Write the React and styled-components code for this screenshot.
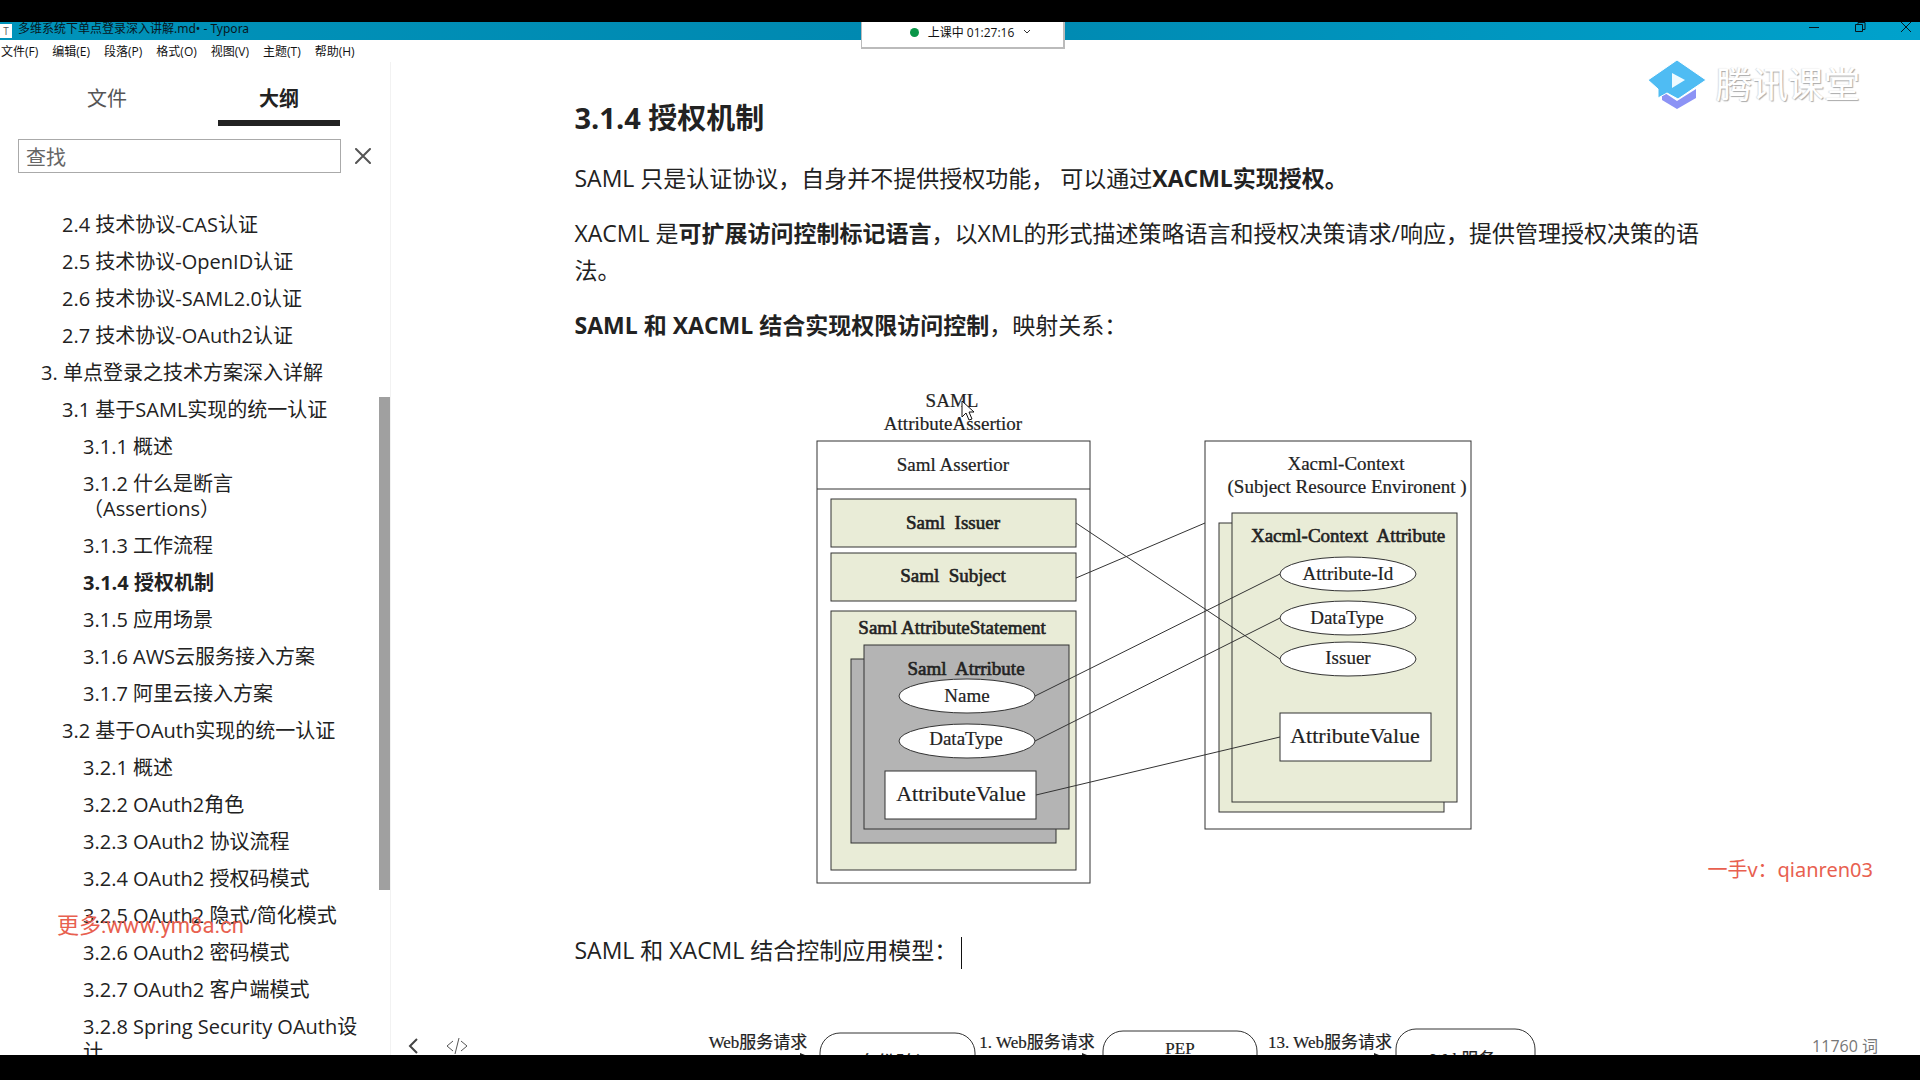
import React, { useState } from 'react'
import styled, { createGlobalStyle } from 'styled-components';

const GlobalStyle = createGlobalStyle`
    * {
        box-sizing: border-box;
    }

    body {
        margin: 0;
        background: #000;
        color: #222;
        font-family: "Open Sans", "Noto Sans CJK SC", sans-serif;
    }

    button, input {
        font: inherit;
        color: inherit;
    }

    button {
        padding: 0;
        border: 0;
        background: none;
        cursor: pointer;
    }
`;

const Screen = styled.div`
    height: 100vh;
    padding: 22px 0 25px;
`;

const Window = styled.div`
    position: relative;
    display: flex;
    flex-direction: column;
    height: 100%;
    overflow: hidden;
    background: #fff;
`;

const TitleBar = styled.header`
    display: flex;
    align-items: center;
    gap: 6px;
    height: 18px;
    padding-right: 9px;
    overflow: hidden;
    background: linear-gradient(90deg, #0093ba, #0088b0 50%, #00a2cc);
    color: #08161c;
    font-size: 12px;
    line-height: 16px;
`;

const AppBadge = styled.span`
    width: 12px;
    height: 14px;
    background: #fff;
    color: #555;
    font-size: 10px;
    line-height: 14px;
    text-align: center;
`;

const WindowTitle = styled.span`
    flex: 1;
    padding-bottom: 4px;
    font-family: "Noto Sans", "Noto Sans CJK SC", sans-serif;
`;

const WindowButtons = styled.div`
    display: flex;
    gap: 36px;
    padding-bottom: 6px;

    button {
        width: 10px;
        height: 12px;
    }

    svg {
        display: block;
    }
`;

const ClassTimer = styled.button`
    position: absolute;
    top: 0;
    left: 50%;
    display: flex;
    align-items: center;
    justify-content: center;
    gap: 9px;
    width: 204px;
    height: 27px;
    margin-left: -99px;
    padding: 0 0 5px 16px;
    border: 1px solid #bbb;
    border-width: 0 2px 2px 1px;
    background: #fff;
    color: #111;
    font-size: 12px;
`;

const LiveDot = styled.span`
    width: 9px;
    height: 9px;
    border-radius: 50%;
    background: #0a9648;
`;

const MenuBar = styled.nav`
    display: flex;
    gap: 14px;
    height: 22px;
    padding-left: 1px;
    font-size: 12px;
    line-height: 23px;

    button {
        color: #111;
    }
`;

const Workspace = styled.div`
    display: flex;
    flex: 1;
    min-height: 0;
`;

const Sidebar = styled.aside`
    display: flex;
    flex-direction: column;
    flex: 0 0 391px;
    border-right: 1px solid #f2f2f2;
    font-size: 20px;
`;

const Tabs = styled.div`
    display: flex;
    gap: 50px;
    height: 64px;
    padding: 10px 0 0 46px;
`;

const Tab = styled.button`
    width: 122px;
    height: 54px;
    padding-top: 2px;
    border-bottom: 6px solid ${({ $active }) => ($active ? '#222' : 'transparent')};
    color: ${({ $active }) => ($active ? '#222' : '#555')};
    font-weight: ${({ $active }) => ($active ? 700 : 400)};
`;

const SearchRow = styled.div`
    display: flex;
    align-items: center;
    gap: 14px;
    padding: 13px 0 0 18px;
`;

const SearchInput = styled.input`
    width: 323px;
    height: 34px;
    padding: 2px 7px 0;
    border: 1px solid #aaa;

    &::placeholder {
        color: #666;
        opacity: 1;
    }
`;

const OutlineArea = styled.div`
    display: flex;
    flex: 1;
    min-height: 0;
    padding-top: 33px;
    overflow: hidden;
`;

const Outline = styled.ul`
    flex: 1;
    margin: 0;
    padding: 0 18px 0 41px;
    list-style: none;
    text-spacing-trim: space-all;
`;

const OutlineItem = styled.li`
    padding: 6px 0 6px ${({ $level }) => $level * 21}px;
    line-height: 25px;

    a {
        color: #222;
        font-weight: ${({ $active }) => ($active ? 700 : 400)};
        text-decoration: none;
    }
`;

const ScrollThumb = styled.div`
    width: 11px;
    height: 493px;
    margin-top: 191px;
    background: #a0a0a0;
`;

const Editor = styled.main`
    flex: 1;
    min-width: 0;
    padding: 36px 24px 0 0;
    overflow: hidden;
`;

const Article = styled.article`
    max-width: 1138px;
    margin: 0 auto;
    font-size: 23px;
    line-height: 37px;

    p {
        margin: 0 0 18px;
    }

    svg {
        display: block;
        max-width: 100%;
        margin: 0 auto 18px;
    }
`;

const Heading = styled.h3`
    margin: 0 0 22px;
    font-size: 29px;
    line-height: 40px;
`;

const Caret = styled.span`
    display: inline-block;
    width: 1px;
    height: 32px;
    margin-left: 4px;
    background: #111;
    vertical-align: middle;
`;

const DiagramText = styled.text`
    fill: #222;
    font-family: "Liberation Serif", "Noto Sans CJK SC", serif;
    font-size: ${({ $size }) => $size || 19}px;
    text-anchor: middle;
    white-space: pre;
    stroke: #222;
    stroke-width: ${({ $heavy }) => ($heavy ? 0.6 : 0.2)};
`;

const StatusTools = styled.div`
    position: absolute;
    left: 408px;
    bottom: 1px;
    display: flex;
    gap: 27px;

    svg {
        display: block;
    }
`;

const WordCount = styled.button`
    position: absolute;
    right: 42px;
    bottom: -3px;
    color: #777;
    font-size: 16px;
    line-height: 24px;
`;

const Brand = styled.div`
    position: absolute;
    top: 37px;
    right: 60px;
    display: flex;
    align-items: center;
    gap: 10px;
    color: #fff;
    font-size: 36px;
    line-height: 52px;
    text-shadow: 1px 1px 1px #aaa, -1px 0 1px #ddd;
`;

const Watermark = styled.div`
    position: absolute;
    color: #e8604f;
    line-height: 30px;
`;

const SiteMark = styled(Watermark)`
    left: 57px;
    bottom: 114px;
    font-family: Roboto, "Noto Sans CJK SC", sans-serif;
    font-size: 22px;
`;

const ContactMark = styled(Watermark)`
    right: 47px;
    bottom: 170px;
    font-family: "Noto Sans", "Noto Sans CJK SC", sans-serif;
    font-size: 20px;
`;

const menus = ['文件(F)', '编辑(E)', '段落(P)', '格式(O)', '视图(V)', '主题(T)', '帮助(H)'];

const outline = [
    { level: 1, text: '2.4 技术协议-CAS认证' },
    { level: 1, text: '2.5 技术协议-OpenID认证' },
    { level: 1, text: '2.6 技术协议-SAML2.0认证' },
    { level: 1, text: '2.7 技术协议-OAuth2认证' },
    { level: 0, text: '3. 单点登录之技术方案深入详解' },
    { level: 1, text: '3.1 基于SAML实现的统一认证' },
    { level: 2, text: '3.1.1 概述' },
    { level: 2, text: '3.1.2 什么是断言（Assertions）' },
    { level: 2, text: '3.1.3 工作流程' },
    { level: 2, text: '3.1.4 授权机制' },
    { level: 2, text: '3.1.5 应用场景' },
    { level: 2, text: '3.1.6 AWS云服务接入方案' },
    { level: 2, text: '3.1.7 阿里云接入方案' },
    { level: 1, text: '3.2 基于OAuth实现的统一认证' },
    { level: 2, text: '3.2.1 概述' },
    { level: 2, text: '3.2.2 OAuth2角色' },
    { level: 2, text: '3.2.3 OAuth2 协议流程' },
    { level: 2, text: '3.2.4 OAuth2 授权码模式' },
    { level: 2, text: '3.2.5 OAuth2 隐式/简化模式' },
    { level: 2, text: '3.2.6 OAuth2 密码模式' },
    { level: 2, text: '3.2.7 OAuth2 客户端模式' },
    { level: 2, text: '3.2.8 Spring Security OAuth设计' },
];

const MappingDiagram = () => (
    <svg width="688" height="552" viewBox="0 -18 688 552" role="img" aria-label="SAML / XACML">
        <g fill="#fff" stroke="#333">
            <rect x="17" y="61" width="273" height="442" />
            <path d="M17 109H290" />
            <g fill="#e9ecd7">
                <rect x="31" y="119" width="245" height="48" />
                <rect x="31" y="173" width="245" height="48" />
                <rect x="31" y="231" width="245" height="259" />
            </g>
            <g fill="#b4b4b4">
                <rect x="51" y="279" width="205" height="184" />
                <rect x="64" y="265" width="205" height="184" />
            </g>
            <ellipse cx="167" cy="316" rx="68" ry="17" />
            <ellipse cx="167" cy="361" rx="68" ry="17" />
            <rect x="85" y="391" width="151" height="48" />

            <rect x="405" y="61" width="266" height="388" />
            <g fill="#e9ecd7">
                <rect x="419" y="143" width="225" height="289" />
                <rect x="432" y="133" width="225" height="289" />
            </g>
            <ellipse cx="548" cy="194" rx="68" ry="17" />
            <ellipse cx="548" cy="238" rx="68" ry="17" />
            <ellipse cx="548" cy="279" rx="68" ry="17" />
            <rect x="480" y="333" width="151" height="48" />

            <path d="M276 143L480 279M276 198L405 143M235 316L480 194M235 361L480 238M236 415L480 357" />
        </g>

        <DiagramText x="152" y="27">SAML</DiagramText>
        <DiagramText x="153" y="50">AttributeAssertior</DiagramText>
        <DiagramText x="153" y="91">Saml Assertior</DiagramText>
        <DiagramText x="153" y="149" $heavy>{'Saml  Issuer'}</DiagramText>
        <DiagramText x="153" y="202" $heavy>{'Saml  Subject'}</DiagramText>
        <DiagramText x="152" y="254" $heavy>Saml AttributeStatement</DiagramText>
        <DiagramText x="166" y="295" $heavy>{'Saml  Atrribute'}</DiagramText>
        <DiagramText x="167" y="322">Name</DiagramText>
        <DiagramText x="166" y="365">DataType</DiagramText>
        <DiagramText x="161" y="421" $size={22}>AttributeValue</DiagramText>

        <DiagramText x="546" y="90">Xacml-Context</DiagramText>
        <DiagramText x="547" y="113">(Subject Resource Environent )</DiagramText>
        <DiagramText x="548" y="162" $heavy>{'Xacml-Context  Attribute'}</DiagramText>
        <DiagramText x="548" y="200">Attribute-Id</DiagramText>
        <DiagramText x="547" y="244">DataType</DiagramText>
        <DiagramText x="548" y="284">Issuer</DiagramText>
        <DiagramText x="555" y="363" $size={22}>AttributeValue</DiagramText>

        {/* mouse pointer */}
        <path d="M162 21V37L166 33L169 40L172 39L169 32H174Z" fill="#fff" stroke="#111" />
    </svg>
);

const ModelDiagram = () => (
    <svg width="888" height="160" viewBox="0 0 888 160" role="img" aria-label="PEP">
        <g fill="none" stroke="#333">
            <rect x="120" y="46" width="155" height="84" rx="20" />
            <rect x="403" y="44" width="154" height="84" rx="20" />
            <rect x="696" y="42" width="139" height="88" rx="20" />
            <path d="M8 70H102M279 70H385M568 70H676" />
        </g>
        <path d="M100 66L110 70L100 74ZM382 66L392 70L382 74ZM674 66L684 70L674 74Z" fill="#222" />
        <DiagramText x="58" y="61" $size={17}>Web服务请求</DiagramText>
        <DiagramText x="196" y="83" $size={19}>身份验证</DiagramText>
        <DiagramText x="337" y="61" $size={17}>1. Web服务请求</DiagramText>
        <DiagramText x="480" y="67" $size={17}>PEP</DiagramText>
        <DiagramText x="630" y="61" $size={17}>13. Web服务请求</DiagramText>
        <DiagramText x="763" y="78" $size={17}>Web服务</DiagramText>
    </svg>
);

const App = () => {
    const [tab, setTab] = useState('大纲');
    const [query, setQuery] = useState('');
    const [active, setActive] = useState('3.1.4 授权机制');

    return (
        <Screen lang="zh-CN">
            <GlobalStyle />
            <Window>
                <TitleBar>
                    <AppBadge>T</AppBadge>
                    <WindowTitle>多维系统下单点登录深入讲解.md• - Typora</WindowTitle>
                    <WindowButtons>
                        <button aria-label="最小化">
                            <svg width="10" height="12" stroke="#08161c"><path d="M0 5.5H10" /></svg>
                        </button>
                        <button aria-label="还原">
                            <svg width="11" height="12" fill="none" stroke="#08161c">
                                <path d="M0.5 2.5H7.5V9.5H0.5ZM3 2V0.5H10V7.5H8" />
                            </svg>
                        </button>
                        <button aria-label="关闭">
                            <svg width="10" height="12" stroke="#08161c"><path d="M0 0L10 10M10 0L0 10" /></svg>
                        </button>
                    </WindowButtons>
                </TitleBar>
                <MenuBar>
                    {menus.map((name) => <button key={name}>{name}</button>)}
                </MenuBar>

                <Workspace>
                    <Sidebar>
                        <Tabs role="tablist">
                            {['文件', '大纲'].map((name) => (
                                <Tab
                                    key={name}
                                    role="tab"
                                    aria-selected={tab === name}
                                    $active={tab === name}
                                    onClick={() => setTab(name)}
                                >
                                    {name}
                                </Tab>
                            ))}
                        </Tabs>
                        <SearchRow>
                            <SearchInput
                                aria-label="查找"
                                placeholder="查找"
                                value={query}
                                onChange={(e) => setQuery(e.target.value)}
                            />
                            <button aria-label="清除" onClick={() => setQuery('')}>
                                <svg width="16" height="16" stroke="#555" strokeWidth="2" strokeLinecap="round">
                                    <path d="M1 1L15 15M15 1L1 15" />
                                </svg>
                            </button>
                        </SearchRow>
                        <OutlineArea>
                            <Outline>
                                {outline.map(({ level, text }) => (
                                    <OutlineItem key={text} $level={level} $active={active === text}>
                                        <a href="#section" onClick={() => setActive(text)}>{text}</a>
                                    </OutlineItem>
                                ))}
                            </Outline>
                            <ScrollThumb />
                        </OutlineArea>
                    </Sidebar>

                    <Editor>
                        <Article id="section">
                            <Heading>3.1.4 授权机制</Heading>
                            <p>
                                SAML 只是认证协议，自身并不提供授权功能， 可以通过<strong>XACML实现授权。</strong>
                            </p>
                            <p>
                                XACML 是<strong>可扩展访问控制标记语言</strong>，以XML的形式描述策略语言和授权决策请求/响应，提供管理授权决策的语法。
                            </p>
                            <p>
                                <strong>SAML 和 XACML 结合实现权限访问控制</strong>，映射关系：
                            </p>
                            <MappingDiagram />
                            <p>SAML 和 XACML 结合控制应用模型：<Caret /></p>
                            <ModelDiagram />
                        </Article>
                    </Editor>
                </Workspace>

                <ClassTimer>
                    <LiveDot />
                    上课中 01:27:16
                    <svg width="8" height="6" fill="none" stroke="#333"><path d="M1 1L4 4L7 1" /></svg>
                </ClassTimer>

                <Brand>
                    <svg width="58" height="50" viewBox="0 0 58 50">
                        <path d="M14 31L29 41L48 29V38L29 49L14 40Z" fill="#8c93f5" />
                        <path d="M29 0L58 20L30 39L19 33L10 38V29L0 20Z" fill="#4fbcf3" stroke="#fff" />
                        <path d="M24 13V28L37 20Z" fill="#eefaff" />
                    </svg>
                    腾讯课堂
                </Brand>
                <SiteMark>更多:www.ym8a.cn</SiteMark>
                <ContactMark>一手v：qianren03</ContactMark>

                <StatusTools>
                    <button aria-label="侧边栏">
                        <svg width="11" height="16" fill="none" stroke="#444" strokeWidth="2"><path d="M9 1L2 8L9 15" /></svg>
                    </button>
                    <button aria-label="源代码模式">
                        <svg width="22" height="16" fill="none" stroke="#555">
                            <path d="M7 3L1 8L7 13M15 3L21 8L15 13M13 0L9 16" />
                        </svg>
                    </button>
                </StatusTools>
                <WordCount>11760 词</WordCount>
            </Window>
        </Screen>
    )
}

export default App
